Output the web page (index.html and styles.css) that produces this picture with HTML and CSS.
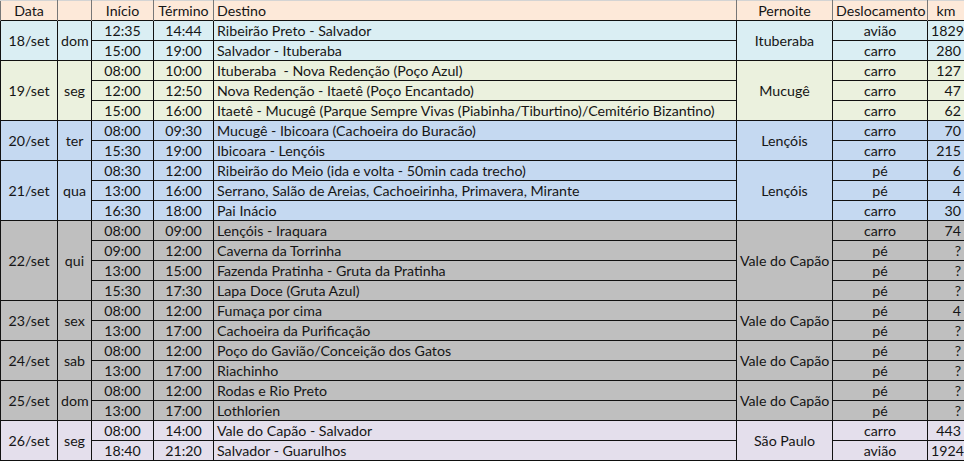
FILE: index.html
```html
<!DOCTYPE html>
<html lang="pt">
<head>
<meta charset="utf-8">
<title>Roteiro Chapada</title>
<link rel="stylesheet" href="styles.css">
</head>
<body>
<table class="sheet">
  <colgroup>
    <col class="c-data"><col class="c-dia"><col class="c-ini"><col class="c-fim"><col class="c-dest"><col class="c-pern"><col class="c-desl"><col class="c-km">
  </colgroup>
  <thead>
    <tr class="head">
      <th>Data</th><th></th><th>Início</th><th>Término</th><th class="left dest-h">Destino</th><th>Pernoite</th><th>Deslocamento</th><th>km</th>
    </tr>
  </thead>
  <tbody>
    <tr class="g-blue"><td rowspan="2">18/set</td><td rowspan="2">dom</td><td>12:35</td><td>14:44</td><td class="left">Ribeirão Preto - Salvador</td><td rowspan="2">Ituberaba</td><td>avião</td><td class="num">1829</td></tr>
    <tr class="g-blue"><td>15:00</td><td>19:00</td><td class="left">Salvador - Ituberaba</td><td>carro</td><td class="num">280</td></tr>

    <tr class="g-green"><td rowspan="3">19/set</td><td rowspan="3">seg</td><td>08:00</td><td>10:00</td><td class="left">Ituberaba &nbsp;- Nova Redenção (Poço Azul)</td><td rowspan="3">Mucugê</td><td>carro</td><td class="num">127</td></tr>
    <tr class="g-green"><td>12:00</td><td>12:50</td><td class="left">Nova Redenção - Itaetê (Poço Encantado)</td><td>carro</td><td class="num">47</td></tr>
    <tr class="g-green"><td>15:00</td><td>16:00</td><td class="left">Itaetê - Mucugê (Parque Sempre Vivas (Piabinha/Tiburtino)/Cemitério Bizantino)</td><td>carro</td><td class="num">62</td></tr>

    <tr class="g-sky"><td rowspan="2">20/set</td><td rowspan="2">ter</td><td>08:00</td><td>09:30</td><td class="left">Mucugê - Ibicoara (Cachoeira do Buracão)</td><td rowspan="2">Lençóis</td><td>carro</td><td class="num">70</td></tr>
    <tr class="g-sky"><td>15:30</td><td>19:00</td><td class="left">Ibicoara - Lençóis</td><td>carro</td><td class="num">215</td></tr>

    <tr class="g-sky"><td rowspan="3">21/set</td><td rowspan="3">qua</td><td>08:30</td><td>12:00</td><td class="left">Ribeirão do Meio (ida e volta - 50min cada trecho)</td><td rowspan="3">Lençóis</td><td>pé</td><td class="num">6</td></tr>
    <tr class="g-sky"><td>13:00</td><td>16:00</td><td class="left">Serrano, Salão de Areias, Cachoeirinha, Primavera, Mirante</td><td>pé</td><td class="num">4</td></tr>
    <tr class="g-sky"><td>16:30</td><td>18:00</td><td class="left">Pai Inácio</td><td>carro</td><td class="num">30</td></tr>

    <tr class="g-gray"><td rowspan="4">22/set</td><td rowspan="4">qui</td><td>08:00</td><td>09:00</td><td class="left">Lençóis - Iraquara</td><td rowspan="4">Vale do Capão</td><td>carro</td><td class="num">74</td></tr>
    <tr class="g-gray"><td>09:00</td><td>12:00</td><td class="left">Caverna da Torrinha</td><td>pé</td><td class="num">?</td></tr>
    <tr class="g-gray"><td>13:00</td><td>15:00</td><td class="left">Fazenda Pratinha - Gruta da Pratinha</td><td>pé</td><td class="num">?</td></tr>
    <tr class="g-gray"><td>15:30</td><td>17:30</td><td class="left">Lapa Doce (Gruta Azul)</td><td>pé</td><td class="num">?</td></tr>

    <tr class="g-gray"><td rowspan="2">23/set</td><td rowspan="2">sex</td><td>08:00</td><td>12:00</td><td class="left">Fumaça por cima</td><td rowspan="2">Vale do Capão</td><td>pé</td><td class="num">4</td></tr>
    <tr class="g-gray"><td>13:00</td><td>17:00</td><td class="left">Cachoeira da Purificação</td><td>pé</td><td class="num">?</td></tr>

    <tr class="g-gray"><td rowspan="2">24/set</td><td rowspan="2">sab</td><td>08:00</td><td>12:00</td><td class="left">Poço do Gavião/Conceição dos Gatos</td><td rowspan="2">Vale do Capão</td><td>pé</td><td class="num">?</td></tr>
    <tr class="g-gray"><td>13:00</td><td>17:00</td><td class="left">Riachinho</td><td>pé</td><td class="num">?</td></tr>

    <tr class="g-gray"><td rowspan="2">25/set</td><td rowspan="2">dom</td><td>08:00</td><td>12:00</td><td class="left">Rodas e Rio Preto</td><td rowspan="2">Vale do Capão</td><td>pé</td><td class="num">?</td></tr>
    <tr class="g-gray"><td>13:00</td><td>17:00</td><td class="left">Lothlorien</td><td>pé</td><td class="num">?</td></tr>

    <tr class="g-lav"><td rowspan="2">26/set</td><td rowspan="2">seg</td><td>08:00</td><td>14:00</td><td class="left">Vale do Capão - Salvador</td><td rowspan="2">São Paulo</td><td>carro</td><td class="num">443</td></tr>
    <tr class="g-lav"><td>18:40</td><td>21:20</td><td class="left">Salvador - Guarulhos</td><td>avião</td><td class="num">1924</td></tr>
  </tbody>
</table>
</body>
</html>
```

FILE: styles.css
```css
html, body {
  margin: 0;
  padding: 0;
  background: #ffffff;
}

.sheet {
  border-collapse: collapse;
  table-layout: fixed;
  width: 964px;
  font-family: Lato, "Open Sans", sans-serif;
  font-size: 14.2px;
  color: #151515;
}

.c-data { width: 57px; }
.c-dia { width: 34px; }
.c-ini { width: 62px; }
.c-fim { width: 60px; }
.c-dest { width: 523px; }
.c-pern { width: 96px; }
.c-desl { width: 95px; }
.c-km { width: 37px; }

.sheet th,
.sheet td {
  padding: 0 3px;
  height: 19px;
  line-height: 19px;
  text-align: center;
  white-space: nowrap;
  overflow: hidden;
  font-weight: normal;
}

.sheet td {
  border: 1px solid #111;
}

.head th {
  background: #fde9d9;
  border-top: 1px solid #d4d4d4;
  border-left: 1px solid #777;
  border-right: 1px solid #777;
  border-bottom: 0;
}

.head th.dest-h {
  border-bottom: 1px solid #111;
}

.sheet .left { text-align: left; }
.sheet .num { text-align: right; padding-right: 3px; }

.g-blue td { background: #daeef3; }
.g-green td { background: #ebf1de; }
.g-sky td { background: #c5d9f1; }
.g-gray td { background: #bfbfbf; }
.g-lav td { background: #e4dfec; }
```
